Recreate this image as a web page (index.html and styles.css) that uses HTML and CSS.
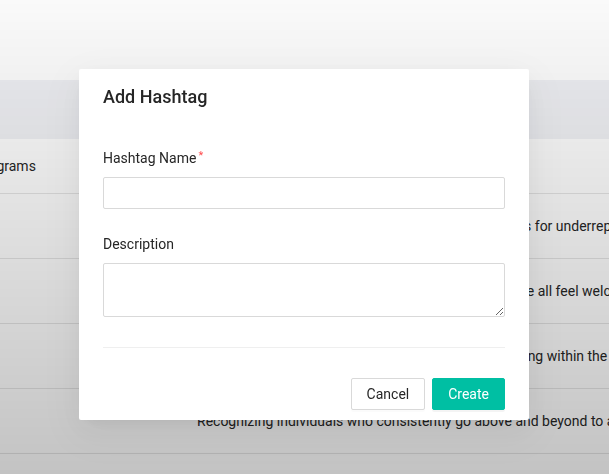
FILE: index.html
```html
<!DOCTYPE html>
<html lang="en">
<head>
<meta charset="utf-8">
<title>Add Hashtag</title>
<link rel="stylesheet" href="styles.css">
</head>
<body>
<div class="page">
  <header class="page-header"></header>
  <div class="table">
    <div class="thead"></div>
    <div class="row row-first">
      <div class="cell cell-name">Programs</div>
      <div class="cell cell-desc"></div>
    </div>
    <div class="row">
      <div class="cell cell-name"></div>
      <div class="cell cell-desc">Promoting justice and boosting learning opportunities for underrepresented groups</div>
    </div>
    <div class="row">
      <div class="cell cell-name"></div>
      <div class="cell cell-desc">Fostering an inclusive, fair workplace culture to ensure all feel welcome</div>
    </div>
    <div class="row">
      <div class="cell cell-name"></div>
      <div class="cell cell-desc">Supporting teamwork and building a sense of belonging within the company</div>
    </div>
    <div class="row">
      <div class="cell cell-name"></div>
      <div class="cell cell-desc">Recognizing individuals who consistently go above and beyond to achieve results</div>
    </div>
    <div class="row">
      <div class="cell cell-name"></div>
      <div class="cell cell-desc"></div>
    </div>
  </div>
</div>

<div class="mask"></div>

<div class="modal-wrap">
  <div class="modal">
    <h2 class="modal-title">Add Hashtag</h2>
    <form class="form">
      <div class="form-item">
        <label class="label" for="name">Hashtag Name<span class="req">*</span></label>
        <input class="input" id="name" type="text">
      </div>
      <div class="form-item form-item-last">
        <label class="label" for="desc">Description</label>
        <textarea class="input textarea" id="desc"></textarea>
      </div>
      <div class="divider"></div>
      <div class="footer">
        <button type="button" class="btn">Cancel</button>
        <button type="button" class="btn btn-primary">Create</button>
      </div>
    </form>
  </div>
</div>
</body>
</html>
```

FILE: styles.css
```css
* { box-sizing: border-box; }

html, body {
  margin: 0;
  padding: 0;
  height: 100%;
  overflow: hidden;
}

body {
  font-family: Roboto, "Liberation Sans", sans-serif;
  font-size: 14px;
  color: rgba(0, 0, 0, 0.85);
  background: #ffffff;
}

.page-header {
  height: 80px;
  background: #ffffff;
}

.thead {
  height: 59px;
  background: #f1f2f6;
}

.row {
  display: flex;
  align-items: center;
  height: 65px;
  border-bottom: 1px solid #e6e6e6;
  background: #ffffff;
  white-space: nowrap;
  overflow: hidden;
}

.row-first {
  height: 55px;
}

.cell-name {
  width: 197px;
  flex: none;
  text-indent: -25px;
  color: #262626;
}

.cell-desc {
  flex: none;
  color: #262626;
}

.mask {
  position: fixed;
  inset: 0;
  background: linear-gradient(to bottom, rgba(0, 0, 0, 0.02) 0%, rgba(0, 0, 0, 0.235) 100%);
}

.modal-wrap {
  position: fixed;
  top: 69px;
  left: 79px;
}

.modal {
  width: 450px;
  background: #ffffff;
  border-radius: 2px;
  padding: 0 24px 10px;
  box-shadow: 0 6px 16px -8px rgba(0, 0, 0, 0.08),
              0 9px 28px 0 rgba(0, 0, 0, 0.05),
              0 12px 48px 16px rgba(0, 0, 0, 0.03);
}

.modal-title {
  margin: 0;
  padding-top: 16px;
  font-size: 18px;
  line-height: 24px;
  font-weight: 500;
  color: #262626;
}

.form {
  margin: 38px 0 0;
}

.form-item {
  margin-bottom: 24px;
}

.form-item-last {
  margin-bottom: 0;
}

.label {
  display: block;
  line-height: 22px;
  padding-bottom: 8px;
  color: #262626;
}

.req {
  color: #ff4d4f;
  font-size: 11px;
  margin-left: 2px;
  vertical-align: 4px;
  line-height: 1;
}

.input {
  display: block;
  width: 100%;
  height: 32px;
  margin: 0;
  border: 1px solid #d9d9d9;
  border-radius: 2px;
  background: #ffffff;
  font-family: inherit;
  font-size: 14px;
  padding: 4px 11px;
  outline: none;
}

.textarea {
  height: 54px;
  resize: vertical;
}

.divider {
  height: 1px;
  background: #efefef;
  margin-top: 30px;
}

.footer {
  display: flex;
  justify-content: flex-end;
  gap: 7px;
  margin-top: 30px;
}

.btn {
  height: 32px;
  padding: 4px 15px;
  border: 1px solid #d9d9d9;
  border-radius: 2px;
  background: #ffffff;
  color: #262626;
  font-family: inherit;
  font-size: 14px;
  line-height: 22px;
  box-shadow: 0 2px 0 rgba(0, 0, 0, 0.015);
}

.btn-primary {
  background: #00bfa3;
  border-color: #00bfa3;
  color: #ffffff;
  box-shadow: 0 2px 0 rgba(0, 0, 0, 0.045);
}
```
